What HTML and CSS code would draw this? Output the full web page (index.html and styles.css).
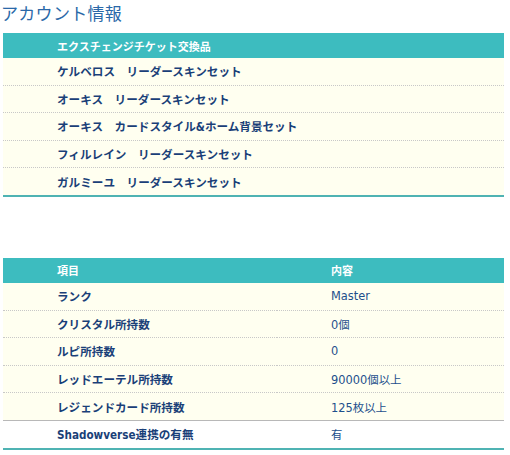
FILE: index.html
```html
<!DOCTYPE html>
<html lang="ja">
<head>
<meta charset="utf-8">
<link rel="stylesheet" href="styles.css">
</head>
<body>
<h2 class="title">アカウント情報</h2>
<table class="info single">
  <thead><tr><th>エクスチェンジチケット交換品</th></tr></thead>
  <tbody>
    <tr><td>ケルベロス　リーダースキンセット</td></tr>
    <tr><td>オーキス　リーダースキンセット</td></tr>
    <tr><td>オーキス　カードスタイル&amp;ホーム背景セット</td></tr>
    <tr><td>フィルレイン　リーダースキンセット</td></tr>
    <tr><td>ガルミーユ　リーダースキンセット</td></tr>
  </tbody>
</table>
<table class="info pair">
  <thead><tr><th class="k">項目</th><th class="v">内容</th></tr></thead>
  <tbody>
    <tr><td class="k">ランク</td><td class="v">Master</td></tr>
    <tr><td class="k">クリスタル所持数</td><td class="v">0個</td></tr>
    <tr><td class="k">ルピ所持数</td><td class="v">0</td></tr>
    <tr><td class="k">レッドエーテル所持数</td><td class="v">90000個以上</td></tr>
    <tr><td class="k">レジェンドカード所持数</td><td class="v">125枚以上</td></tr>
    <tr class="plain"><td class="k">Shadowverse連携の有無</td><td class="v">有</td></tr>
  </tbody>
</table>
</body>
</html>
```
FILE: styles.css
```css
html, body { margin: 0; padding: 0; background: #fff; }
body {
  font-family: "Noto Sans", "Noto Sans CJK JP", sans-serif;
  padding: 0 6px 0 3px;
}
.title {
  margin: 0 0 0 -2px;
  height: 33px;
  padding: 2px 0 0 0;
  box-sizing: border-box;
  font-size: 17px;
  line-height: 22px;
  font-weight: normal;
  color: #2a68a8;
  font-family: "Noto Sans CJK JP", sans-serif;
  letter-spacing: 0.3px;
}
.info {
  width: 100%;
  border-collapse: collapse;
  border-bottom: 2px solid #4fb3b3;
  font-size: 11.6px;
}
.single { margin-top: 0; }
.pair { margin-top: 61px; }
.info th {
  background: #3dbcbf;
  color: #fff;
  text-align: left;
  font-size: 11px;
  font-weight: bold;
  height: 25px;
  padding: 0 0 0 54px;
}
.info td {
  background: #fffff0;
  color: #1a3f78;
  font-weight: bold;
  height: 26.6px;
  padding: 0 0 0 54px;
  border-top: 1px dotted #c8c8c8;
  font-family: "DejaVu Sans", "Noto Sans CJK JP", sans-serif;
  font-stretch: condensed;
}
.info tbody tr:first-child td { border-top: none; }
.info th.k, .info td.k { width: 220px; }
.info td.v {
  font-weight: normal;
  color: #1d4f8c;
  font-family: "DejaVu Sans", "Noto Sans CJK JP", sans-serif;
  font-stretch: normal;
  font-size: 11.4px;
}
.info tr.plain td { background: #fff; border-top: 1px solid #b8b8b8; }
```
